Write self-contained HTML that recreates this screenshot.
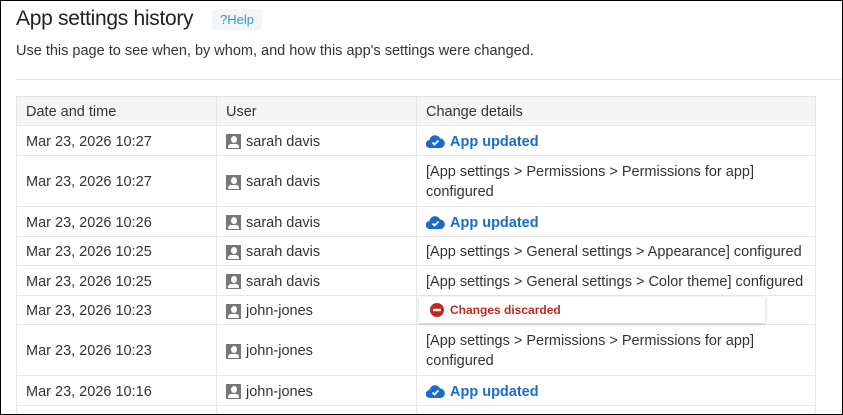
<!DOCTYPE html>
<html style="overflow:hidden;height:415px"><head><style>
*{box-sizing:border-box;margin:0;padding:0}
body{width:843px;height:415px;overflow:hidden;background:#fff;font-family:"Liberation Sans",sans-serif;color:#333;position:relative}
.frame{position:absolute;left:0;top:0;width:843px;height:415px;border:1px solid #000;z-index:10;pointer-events:none}
h1{position:absolute;left:16px;top:7px;font-size:21px;font-weight:normal;color:#222;letter-spacing:-0.3px}
.help{position:absolute;left:212px;top:9px;width:50px;height:21px;background:#f3f5f7;border-radius:3px;color:#3498db;font-size:13px;line-height:21px;text-align:center}
.desc{position:absolute;left:16px;top:43px;font-size:14.5px;color:#333}
.hr{position:absolute;left:16px;right:0;top:79px;border-top:1px solid #e3e3e3}
.row{position:absolute;left:16px;width:800px;border-bottom:1px solid #e6e6e6;font-size:14.5px}
.c{position:absolute;top:0;bottom:0;display:flex;align-items:center;padding-left:9px;padding-top:2px}
.c1{left:0;width:200px;border-left:1px solid #e6e6e6}
.c2{left:200px;width:200px;border-left:1px solid #e6e6e6}
.c3{left:400px;width:400px;border-left:1px solid #e6e6e6;border-right:1px solid #e6e6e6;line-height:20px}
.hd{background:#f5f5f5;border-top:1px solid #e6e6e6}
.av{display:inline-block;width:15px;height:15px;background:#777;margin-right:5px;position:relative;overflow:hidden}
.av:before{content:"";position:absolute;left:4.5px;top:2px;width:6px;height:7px;border-radius:50%;background:#fff}
.av:after{content:"";position:absolute;left:2px;top:10px;width:11px;height:4px;background:#fff;border-radius:3px 3px 0 0}
.up{color:#1a6cc8;font-weight:bold;display:flex;align-items:center}
.disc{position:absolute;left:2px;top:1px;width:346px;height:26px;box-shadow:0 1px 3px rgba(0,0,0,.25);display:flex;align-items:center;padding-left:11px;color:#c0281e;font-weight:bold;font-size:12px;background:#fff}
</style></head><body>
<div class="frame"></div>
<h1>App settings history</h1>
<div class="help">?Help</div>
<div class="desc">Use this page to see when, by whom, and how this app's settings were changed.</div>
<div class="hr"></div>

<div class="row hd" style="top:96px;height:30px"><div class="c c1">Date and time</div><div class="c c2">User</div><div class="c c3">Change details</div></div>

<div class="row" style="top:126px;height:30px"><div class="c c1">Mar 23, 2026 10:27</div><div class="c c2"><span class="av"></span>sarah davis</div><div class="c c3"><span class="up"><svg width="19" height="15" viewBox="0 0 19 15" style="margin-right:5px"><path d="M4 14a4 4 0 0 1-.5-8A5.5 5.5 0 0 1 14 4.5a4.8 4.8 0 0 1 1 9.5z" fill="#1a6cc8"/><path d="M6.5 8.5l2 2 4-4" stroke="#fff" stroke-width="1.8" fill="none"/></svg>App updated</span></div></div>

<div class="row" style="top:156px;height:51px"><div class="c c1">Mar 23, 2026 10:27</div><div class="c c2"><span class="av"></span>sarah davis</div><div class="c c3">[App settings &gt; Permissions &gt; Permissions for app]<br>configured</div></div>

<div class="row" style="top:207px;height:30px"><div class="c c1">Mar 23, 2026 10:26</div><div class="c c2"><span class="av"></span>sarah davis</div><div class="c c3"><span class="up"><svg width="19" height="15" viewBox="0 0 19 15" style="margin-right:5px"><path d="M4 14a4 4 0 0 1-.5-8A5.5 5.5 0 0 1 14 4.5a4.8 4.8 0 0 1 1 9.5z" fill="#1a6cc8"/><path d="M6.5 8.5l2 2 4-4" stroke="#fff" stroke-width="1.8" fill="none"/></svg>App updated</span></div></div>

<div class="row" style="top:237px;height:29px"><div class="c c1">Mar 23, 2026 10:25</div><div class="c c2"><span class="av"></span>sarah davis</div><div class="c c3">[App settings &gt; General settings &gt; Appearance] configured</div></div>

<div class="row" style="top:266px;height:30px"><div class="c c1">Mar 23, 2026 10:25</div><div class="c c2"><span class="av"></span>sarah davis</div><div class="c c3">[App settings &gt; General settings &gt; Color theme] configured</div></div>

<div class="row" style="top:296px;height:29px"><div class="c c1">Mar 23, 2026 10:23</div><div class="c c2"><span class="av"></span>john-jones</div><div class="c c3" style="padding:0"><div class="disc"><svg width="14" height="14" viewBox="0 0 14 14" style="margin-right:6px"><circle cx="7" cy="7" r="7" fill="#c0281e"/><rect x="3" y="5.8" width="8" height="2.4" fill="#fff"/></svg>Changes discarded</div></div></div>

<div class="row" style="top:325px;height:51px"><div class="c c1">Mar 23, 2026 10:23</div><div class="c c2"><span class="av"></span>john-jones</div><div class="c c3">[App settings &gt; Permissions &gt; Permissions for app]<br>configured</div></div>

<div class="row" style="top:376px;height:30px"><div class="c c1">Mar 23, 2026 10:16</div><div class="c c2"><span class="av"></span>john-jones</div><div class="c c3"><span class="up"><svg width="19" height="15" viewBox="0 0 19 15" style="margin-right:5px"><path d="M4 14a4 4 0 0 1-.5-8A5.5 5.5 0 0 1 14 4.5a4.8 4.8 0 0 1 1 9.5z" fill="#1a6cc8"/><path d="M6.5 8.5l2 2 4-4" stroke="#fff" stroke-width="1.8" fill="none"/></svg>App updated</span></div></div>

<div class="row" style="top:406px;height:9px;border-bottom:none"><div class="c c1"></div><div class="c c2"></div><div class="c c3"></div></div>
</body></html>
